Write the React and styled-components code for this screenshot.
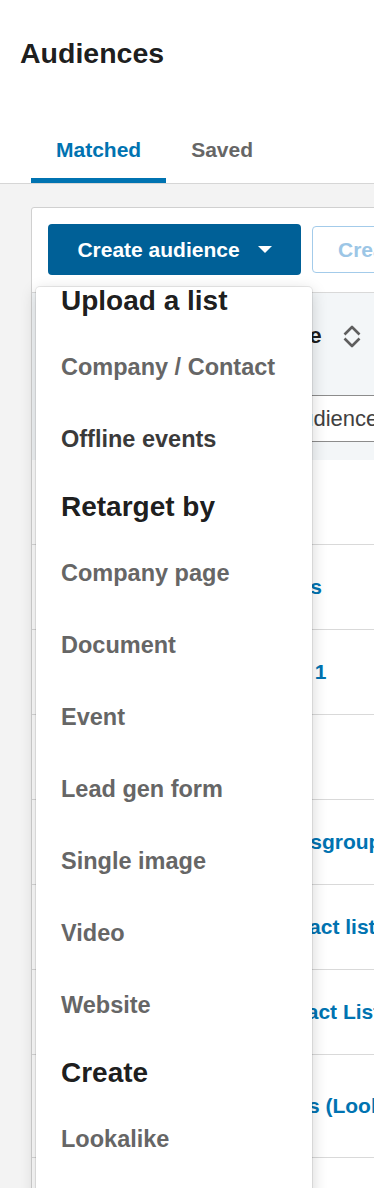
import React from "react"
import styled, { createGlobalStyle } from "styled-components"

const GlobalStyle = createGlobalStyle`
  html, body {
    margin: 0;
    padding: 0;
    overflow: hidden;
    background: #f3f3f3;
  }
  body {
    font-family: "Liberation Sans", Arial, sans-serif;
  }
`

const Top = styled.header`
  background: #ffffff;
  padding-top: 36px;
`

const Title = styled.h1`
  margin: 0 0 0 20px;
  font-size: 28.5px;
  line-height: 34px;
  font-weight: 700;
  color: rgba(0, 0, 0, 0.9);
`

const TabBar = styled.nav`
  display: flex;
  margin-top: 68px;
  padding-left: 31px;
  border-bottom: 1px solid #d6d6d6;
`

const Tab = styled.div`
  padding: 0 25px 16px;
  font-size: 21px;
  line-height: 24px;
  font-weight: 700;
  color: ${(p) => (p.$active ? "#0073b1" : "#666666")};
  border-bottom: 5px solid ${(p) => (p.$active ? "#0073b1" : "transparent")};
`

const Content = styled.main`
  padding: 23px 0 0 31px;
  overflow: hidden;
  height: 1100px;
`

const Card = styled.section`
  position: relative;
  width: 760px;
  background: #ffffff;
  border: 1px solid #d0d0d0;
  border-radius: 3px;
`

const Toolbar = styled.div`
  display: flex;
  align-items: center;
  gap: 11px;
  padding: 16px 16px 17px;
  border-bottom: 1px solid #d9d9d9;
`

const PrimaryButton = styled.button`
  display: flex;
  align-items: center;
  justify-content: center;
  gap: 18px;
  width: 253px;
  height: 51px;
  padding: 0;
  border: none;
  border-radius: 4px;
  background: #006097;
  color: #ffffff;
  font-family: inherit;
  font-size: 21px;
  font-weight: 700;
`

const SecondaryButton = styled.button`
  height: 47px;
  padding: 0 25px;
  border: 1px solid #a3cbea;
  border-radius: 4px;
  background: #ffffff;
  color: #9cc6e6;
  font-family: inherit;
  font-size: 21px;
  font-weight: 700;
  white-space: nowrap;
`

const TableHead = styled.div`
  background: #f3f6f8;
  padding: 30px 0 18px 32px;
`

const HeadLabel = styled.div`
  display: flex;
  align-items: center;
  gap: 21px;
  font-size: 22.3px;
  line-height: 26px;
  font-weight: 700;
  color: rgba(0, 0, 0, 0.9);
  white-space: nowrap;
`

const SearchInput = styled.input`
  display: block;
  box-sizing: border-box;
  width: 440px;
  height: 47px;
  margin-top: 46px;
  padding: 0 0 0 32px;
  border: 1px solid #8c8c8c;
  border-radius: 4px;
  background: #ffffff;
  font-family: inherit;
  font-size: 22px;
  color: #333333;
  &::placeholder {
    color: #404040;
  }
`

const Row = styled.div`
  display: flex;
  align-items: center;
  box-sizing: border-box;
  height: ${(p) => p.$height || 85}px;
  padding-left: 32px;
  border-bottom: 1px solid #d9d9d9;
`

const RowName = styled.a`
  font-size: 21px;
  font-weight: 700;
  color: #0073b1;
  text-decoration: none;
  white-space: nowrap;
`

const Dropdown = styled.div`
  position: absolute;
  top: 79px;
  left: 4px;
  width: 276px;
  min-height: 940px;
  background: #ffffff;
  border-radius: 4px;
  box-shadow: 0 0 0 1px rgba(0, 0, 0, 0.08), 0 4px 16px rgba(0, 0, 0, 0.18);
`

const MenuHeading = styled.div`
  padding: 18px 25px 16px;
  font-size: 28px;
  line-height: 28px;
  font-weight: 700;
  color: rgba(0, 0, 0, 0.9);
  &:first-child {
    padding-top: 0;
  }
`

const MenuItem = styled.div`
  padding: 22px 25px;
  font-size: 23.5px;
  line-height: 28px;
  font-weight: 700;
  color: ${(p) => (p.$hover ? "#3a3a3a" : "#666666")};
  white-space: nowrap;
`

const Caret = () => (
  <svg width="14" height="8" viewBox="0 0 14 8">
    <polygon points="0,0 14,0 7,7" fill="#ffffff" />
  </svg>
)

const SortIcon = () => (
  <svg width="18" height="24" viewBox="0 0 18 24" fill="none" stroke="#5e5e5e" strokeWidth="2.6" strokeLinejoin="round">
    <path d="M1.5 10.5 L9 3 L16.5 10.5" />
    <path d="M1.5 14.5 L9 22 L16.5 14.5" />
  </svg>
)

const rows = [
  { name: "Website visitors" },
  { name: "Lead gen form submitters" },
  { name: "Lead gen form openers - 1" },
  { name: "Event attendees" },
  { name: "Q4 2023 launch attendeesgroup" },
  { name: "Sales qualified lead contact list" },
  { name: "Customer Renewal Contact List" },
  { name: "Showcase page followers (Lookalike)", height: 103 },
  { name: "Newsletter" },
]

const menu = [
  { heading: "Upload a list" },
  { label: "Company / Contact" },
  { label: "Offline events", hover: true },
  { heading: "Retarget by" },
  { label: "Company page" },
  { label: "Document" },
  { label: "Event" },
  { label: "Lead gen form" },
  { label: "Single image" },
  { label: "Video" },
  { label: "Website" },
  { heading: "Create" },
  { label: "Lookalike" },
]

const App = () => {
  return (
    <>
      <GlobalStyle />
      <Top>
        <Title>Audiences</Title>
        <TabBar>
          <Tab $active>Matched</Tab>
          <Tab>Saved</Tab>
        </TabBar>
      </Top>
      <Content>
        <Card>
          <Toolbar>
            <PrimaryButton>
              Create audience <Caret />
            </PrimaryButton>
            <SecondaryButton>Create campaign</SecondaryButton>
          </Toolbar>
          <TableHead>
            <HeadLabel>
              Matched audience name <SortIcon />
            </HeadLabel>
            <SearchInput placeholder="Search by name or audience" />
          </TableHead>
          {rows.map((r) => (
            <Row key={r.name} $height={r.height}>
              <RowName href="#">{r.name}</RowName>
            </Row>
          ))}
          <Dropdown>
            {menu.map((m) =>
              m.heading ? (
                <MenuHeading key={m.heading}>{m.heading}</MenuHeading>
              ) : (
                <MenuItem key={m.label} $hover={m.hover}>
                  {m.label}
                </MenuItem>
              )
            )}
          </Dropdown>
        </Card>
      </Content>
    </>
  )
}

export default App
